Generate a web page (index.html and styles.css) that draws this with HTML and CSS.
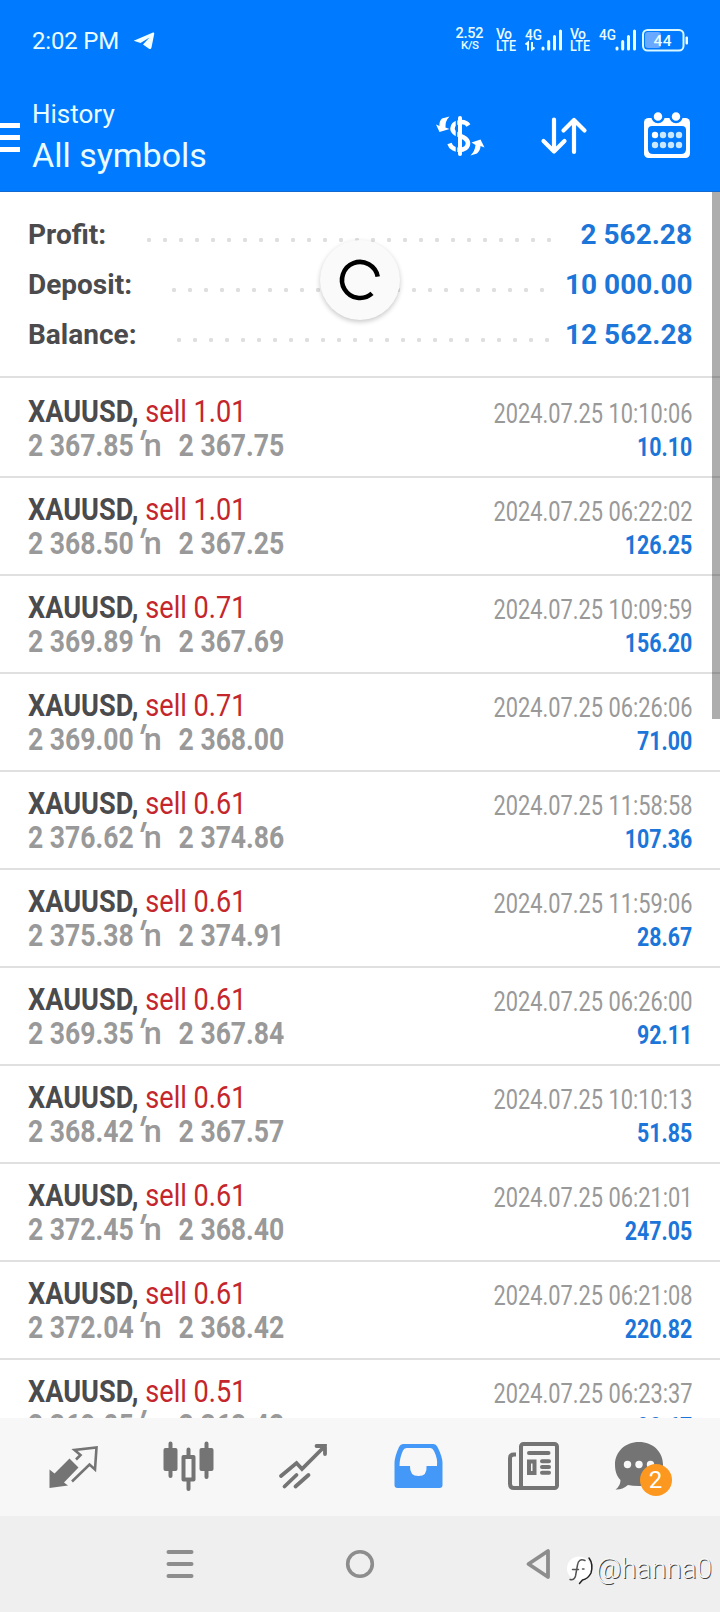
FILE: index.html
```html
<!DOCTYPE html>
<html lang="en">
<head>
<meta charset="utf-8">
<title>History</title>
<link rel="stylesheet" href="styles.css">
</head>
<body>
<div class="phone">
  <header class="header">
    <div class="status">
      <span class="clock">2:02 PM</span>
      <svg class="plane" viewBox="133 31 22 20"><path d="M133.700 40.700 153 32.600Q154.600 32 154.200 34L151.500 47.500Q151 49.800 149 48.700L143 44.500 149.500 37.500 140.500 43Z"/></svg>
      <svg class="indicators" viewBox="450 20 250 40">
        <g class="ind-text">
          <text x="455.500" y="38" font-size="14.500" textLength="28">2.52</text>
          <text x="461" y="49" font-size="11.500" textLength="18">K/S</text>
          <text x="496" y="38.500" font-size="14" textLength="16">Vo</text>
          <text x="496" y="51" font-size="14" textLength="20" lengthAdjust="spacingAndGlyphs">LTE</text>
          <text x="525" y="40" font-size="14.500" textLength="17" lengthAdjust="spacingAndGlyphs">4G</text>
          <text x="570" y="38.500" font-size="14" textLength="16">Vo</text>
          <text x="570" y="51" font-size="14" textLength="20" lengthAdjust="spacingAndGlyphs">LTE</text>
          <text x="599" y="40" font-size="14.500" textLength="17" lengthAdjust="spacingAndGlyphs">4G</text>
        </g>
        <g fill="none" stroke="#eaffff" stroke-width="2"><path d="M525.500 44.500 528 42.500V50.500M532 42V49.500L534.500 47.500"/></g>
        <g fill="none" stroke="#eaffff" stroke-width="3" stroke-linecap="round">
          <path d="M543 48v1M548.700 41.500V49M554.500 36.500V49M560.500 31V49M617 48v1M622.700 41.500V49M628.500 36.500V49M634.500 31V49"/>
        </g>
        <rect x="645" y="32" width="16" height="16" rx="3" fill="#69a9ff"/>
        <rect x="643" y="30" width="40.500" height="20.500" rx="4.500" fill="none" stroke="#d9f7ff" stroke-width="2"/>
        <rect x="685.500" y="36.500" width="2.500" height="8" rx="1" fill="#eaffff"/>
        <text class="level" x="653.500" y="45.500" font-size="15.500" textLength="18">44</text>
      </svg>
    </div>
    <div class="toolbar">
      <span class="menu"><i></i><i></i><i></i></span>
      <div class="titles">
        <div class="subtitle">History</div>
        <div class="title">All symbols</div>
      </div>
      <svg class="actions" viewBox="420 100 300 70">
        <g fill="none" stroke="#fff" stroke-width="4.500">
          <path d="M468.500 125.500C465 120 453 121 452.500 128.500 452 136 468 135 468 143.500 467.500 152 452 152 449.500 143.500"/>
          <path d="M460 118V154" stroke-linecap="round" stroke-width="4"/>
        </g>
        <path d="M456.500 120V154" stroke="#007aff" stroke-width="1.600"/>
        <g fill="#fff">
          <path d="M449.500 116.500 442 118.500Q439 121 439.500 126L436 124.500 439.500 132 449.500 129 445.500 127.500Q445 121 449.500 116.500Z"/>
          <path d="M470.500 155.500 477 153.500Q480.500 150 480.500 146L484.500 147.500 480.500 139.500 471.500 142.500 475.500 145Q475 151 470.500 155.500Z"/>
        </g>
        <g fill="none" stroke="#fff" stroke-width="4.200" stroke-linecap="round" stroke-linejoin="round">
          <path d="M554 119.500V151M543.500 141 554 151.500 564.500 141M574 152V120M563.500 130.500 574 120 584.500 130.500"/>
        </g>
        <rect x="644" y="118" width="46" height="40" rx="4.500" fill="#fff"/>
        <path d="M652 126H682Q686 126 686 130V149Q686 154 681 154H653Q648 154 648 149V130Q648 126 652 126Z" fill="#007aff"/>
        <g fill="#fff" stroke="#007aff" stroke-width="2.500"><circle cx="658" cy="116.500" r="5.500"/><circle cx="676" cy="116.500" r="5.500"/></g>
        <g fill="#c9e7ff"><circle cx="655" cy="135" r="3.200" fill="#fff"/><circle cx="663" cy="135" r="3.200"/><circle cx="671" cy="135" r="3.200"/><circle cx="679" cy="135" r="3.200"/><circle cx="655" cy="145" r="3.200"/><circle cx="663" cy="145" r="3.200"/><circle cx="671" cy="145" r="3.200"/><circle cx="679" cy="145" r="3.200"/></g>
      </svg>
    </div>
  </header>

  <main class="content">
    <section class="summary">
      <div class="sum-row"><b>Profit:</b><i class="dots dots-profit"></i><strong>2 562.28</strong></div>
      <div class="sum-row"><b>Deposit:</b><i class="dots dots-deposit"></i><strong>10 000.00</strong></div>
      <div class="sum-row"><b>Balance:</b><i class="dots dots-balance"></i><strong>12 562.28</strong></div>
    </section>
    <section class="deals">
      <div class="deal"><div class="line"><span class="sym"><b>XAUUSD,</b> sell 1.01</span><span class="date">2024.07.25 10:10:06</span></div><div class="line"><span class="price">2 367.85<i><em>′</em>n</i>2 367.75</span><span class="value">10.10</span></div></div>
      <div class="deal"><div class="line"><span class="sym"><b>XAUUSD,</b> sell 1.01</span><span class="date">2024.07.25 06:22:02</span></div><div class="line"><span class="price">2 368.50<i><em>′</em>n</i>2 367.25</span><span class="value">126.25</span></div></div>
      <div class="deal"><div class="line"><span class="sym"><b>XAUUSD,</b> sell 0.71</span><span class="date">2024.07.25 10:09:59</span></div><div class="line"><span class="price">2 369.89<i><em>′</em>n</i>2 367.69</span><span class="value">156.20</span></div></div>
      <div class="deal"><div class="line"><span class="sym"><b>XAUUSD,</b> sell 0.71</span><span class="date">2024.07.25 06:26:06</span></div><div class="line"><span class="price">2 369.00<i><em>′</em>n</i>2 368.00</span><span class="value">71.00</span></div></div>
      <div class="deal"><div class="line"><span class="sym"><b>XAUUSD,</b> sell 0.61</span><span class="date">2024.07.25 11:58:58</span></div><div class="line"><span class="price">2 376.62<i><em>′</em>n</i>2 374.86</span><span class="value">107.36</span></div></div>
      <div class="deal"><div class="line"><span class="sym"><b>XAUUSD,</b> sell 0.61</span><span class="date">2024.07.25 11:59:06</span></div><div class="line"><span class="price">2 375.38<i><em>′</em>n</i>2 374.91</span><span class="value">28.67</span></div></div>
      <div class="deal"><div class="line"><span class="sym"><b>XAUUSD,</b> sell 0.61</span><span class="date">2024.07.25 06:26:00</span></div><div class="line"><span class="price">2 369.35<i><em>′</em>n</i>2 367.84</span><span class="value">92.11</span></div></div>
      <div class="deal"><div class="line"><span class="sym"><b>XAUUSD,</b> sell 0.61</span><span class="date">2024.07.25 10:10:13</span></div><div class="line"><span class="price">2 368.42<i><em>′</em>n</i>2 367.57</span><span class="value">51.85</span></div></div>
      <div class="deal"><div class="line"><span class="sym"><b>XAUUSD,</b> sell 0.61</span><span class="date">2024.07.25 06:21:01</span></div><div class="line"><span class="price">2 372.45<i><em>′</em>n</i>2 368.40</span><span class="value">247.05</span></div></div>
      <div class="deal"><div class="line"><span class="sym"><b>XAUUSD,</b> sell 0.61</span><span class="date">2024.07.25 06:21:08</span></div><div class="line"><span class="price">2 372.04<i><em>′</em>n</i>2 368.42</span><span class="value">220.82</span></div></div>
      <div class="deal"><div class="line"><span class="sym"><b>XAUUSD,</b> sell 0.51</span><span class="date">2024.07.25 06:23:37</span></div><div class="line"><span class="price">2 369.05<i><em>′</em>n</i>2 368.42</span><span class="value">30.67</span></div></div>
    </section>
    <div class="scrollbar"></div>
    <div class="spinner"><svg viewBox="-40 -40 80 80"><path d="M17.700 -3.300A18 18 0 1 0 12 13.400" fill="none" stroke="#000" stroke-width="4.600"/></svg></div>
  </main>

  <nav class="tabs">
    <svg viewBox="15 1418 115 98"><path d="M49.500 1469.500 54.500 1473.500 69.500 1458.500 78.500 1467.500 64 1482.500 68 1485.500 49.500 1488Z" fill="#747474"/><path d="M76 1459.500 80.500 1455 74.500 1450 96.500 1447.500 95 1469.500 89.500 1464.500 72 1481.500" fill="none" stroke="#747474" stroke-width="2.600"/></svg>
    <svg viewBox="130 1418 115 98"><g fill="#747474"><rect x="163.500" y="1448" width="14" height="23" rx="2"/><rect x="199.500" y="1448" width="14" height="23" rx="2"/></g><path d="M170.500 1443.500V1476M206.500 1443.500V1477M188.500 1449.500V1456M188.500 1481V1489" stroke="#747474" stroke-width="4" stroke-linecap="round"/><rect x="183.500" y="1457" width="10" height="22.500" fill="#f7f7f7" stroke="#747474" stroke-width="4" stroke-linejoin="round"/></svg>
    <svg viewBox="245 1418 115 98"><path d="M281 1476 296.500 1463 302 1469 325 1446M316.500 1446H325V1454M284.500 1486.500 296.500 1475M295.500 1486.500 308.500 1475" fill="none" stroke="#747474" stroke-width="3.800" stroke-linecap="round"/></svg>
    <svg viewBox="360 1418 115 98"><path d="M403 1444H433.500Q436 1444 437.500 1447Q442.500 1457 442.500 1463V1485Q442.500 1488 439.500 1488H397.500Q394.500 1488 394.500 1485V1463Q394.500 1457 399 1447Q400.500 1444 403 1444Z" fill="#4499f8"/><path d="M406.500 1448H430.500Q432.500 1448 434 1451Q438 1459 437 1466H426.500Q427.500 1476 418.500 1476T410 1466H399.500Q399.500 1458 403 1450.500Q404 1448 406.500 1448Z" fill="#f7f7f7"/></svg>
    <svg viewBox="475 1418 115 98"><g fill="none" stroke="#747474" stroke-width="4"><rect x="521" y="1444" width="36" height="44" rx="2.500"/><path d="M516 1454.500H514Q510 1454.500 510 1458V1484Q510 1488 514 1488H523"/><path d="M529 1453H548.500M542 1461.300H549M542 1467H549M542 1472.800H549" stroke-linecap="round"/><rect x="529" y="1461.500" width="5.500" height="11.500"/></g></svg>
    <svg viewBox="590 1418 115 98"><path d="M639 1442C653 1442 663 1452 663 1464.500S653 1486 639 1486Q632 1486 628 1485 622 1490 615.500 1489.500 620.500 1486 620.500 1480C616.500 1476 615 1470.500 615 1464.500 615 1452 625 1442 639 1442Z" fill="#747474"/><g fill="#f8f8f8"><circle cx="627.500" cy="1464.500" r="3.700"/><circle cx="639" cy="1464.500" r="3.700"/><circle cx="650.500" cy="1464.500" r="3.700"/></g><circle cx="656" cy="1480" r="16" fill="#fc9820"/><text class="badge" x="655.500" y="1488" text-anchor="middle">2</text></svg>
  </nav>

  <footer class="sysnav">
    <svg viewBox="90 1516 180 96"><path d="M168.500 1552H191.500M168.500 1564H191.500M168.500 1576H191.500" stroke="#8d8d8d" stroke-width="4" stroke-linecap="round"/></svg>
    <svg viewBox="270 1516 180 96"><circle cx="360" cy="1564" r="12.300" fill="none" stroke="#8d8d8d" stroke-width="3.600"/></svg>
    <svg viewBox="450 1516 180 96"><path d="M528.500 1564 548 1551V1577Z" fill="none" stroke="#8d8d8d" stroke-width="3.800" stroke-linejoin="round"/></svg>
    <svg class="mark" viewBox="560 1546 160 50">
      <circle cx="579" cy="1568.500" r="12" fill="#fff"/>
      <g fill="none" stroke-width="1.500" stroke-linecap="round" stroke-linejoin="round">
        <path d="M585 1560.500Q578.500 1558 577.500 1565L575.500 1576Q574.500 1580.500 570 1579.500M572.500 1569.500H578.500M582.500 1569H584" stroke="#555"/>
        <path d="M589 1558Q593.500 1564 591 1573 588 1579 582.500 1580L579.500 1583.500" stroke="#222"/>
      </g>
      <text class="handle" x="596" y="1578" textLength="116" lengthAdjust="spacingAndGlyphs">@hanna0</text>
    </svg>
  </footer>
</div>
</body>
</html>
```
FILE: styles.css
```css
* { box-sizing: border-box; }
body { margin: 0; background: #fff; font-family: Roboto, "Liberation Sans", sans-serif; }
i { font-style: normal; }
svg { display: block; }
.phone { width: 720px; height: 1612px; display: flex; flex-direction: column; overflow: hidden; }

.header { height: 192px; flex: none; background: #007aff; border-bottom: 1px solid #1269cf; color: #e9fdff; }
.status { height: 80px; display: flex; align-items: center; padding-left: 32px; }
.clock { width: 101px; font-size: 24px; line-height: 80px; letter-spacing: -.2px; padding-top: 1px; }
.plane { width: 22px; height: 20px; margin-top: 2px; fill: #f2ffff; }
.indicators { width: 250px; height: 40px; margin: 0 20px 0 auto; }
.ind-text { fill: #e9fdff; font-weight: 500; }
.level { fill: #e9fdff; font-weight: 500; }
.toolbar { display: flex; align-items: flex-start; height: 111px; }
.menu { display: flex; flex-direction: column; gap: 7px; width: 20px; margin-top: 43px; }
.menu i { height: 5px; background: #fff; }
.titles { margin: 19px 0 0 12px; white-space: nowrap; }
.subtitle { font-size: 26px; line-height: 30px; height: 36px; }
.title { font-size: 34px; line-height: 40px; }
.actions { width: 300px; height: 70px; margin: 20px 0 0 auto; }

.content { position: relative; height: 1226px; flex: none; overflow: hidden; background: #fff; }
.summary { height: 186px; padding: 18px 28px 0; }
.sum-row { height: 50px; line-height: 50px; display: flex; align-items: center; justify-content: space-between; font-size: 28px; }
.sum-row b { color: #4b4b4d; }
.sum-row strong { color: #1c75d8; width: 127px; text-align: right; white-space: nowrap; }
.dots { height: 4px; margin: 9px 16px 0 auto; background: radial-gradient(circle at 2px 2px, #dfdfdf 1.900px, transparent 2.500px) 0 0 / 16px 4px repeat-x; }
.dots-profit { width: 404px; margin-right: 14px; }
.dots-deposit { width: 372px; margin-right: 21px; }
.dots-balance { width: 372px; margin-right: 16px; }

.deal { height: 98px; padding: 14px 28px 0; border-top: 2px solid #e0e0e0; }
.deal:first-child { height: 100px; padding-top: 16px; margin-top: -2px; }
.line { height: 34px; line-height: 34px; display: flex; align-items: baseline; justify-content: space-between; white-space: nowrap; }
.sym { font-size: 32px; color: #c4262b; transform: scaleX(.848); transform-origin: left; }
.sym b { color: #4b4b4d; }
.date { font-size: 27px; color: #999; transform: translateY(1px) scaleX(.807); transform-origin: right; }
.price { font-size: 32px; font-weight: 700; color: #999; transform: scaleX(.83); transform-origin: left; }
.price i { display: inline-block; width: 54px; padding-left: 6px; font-weight: 500; transform: scaleX(1.22); transform-origin: 6px 50%; }
.price em { display: inline-block; transform: skewX(-8deg) scale(1.25); transform-origin: 50% 30%; }
.value { font-size: 26px; font-weight: 700; color: #1c75d8; transform: scaleX(.82); transform-origin: right; }

.scrollbar { position: absolute; right: 0; top: 0; width: 8px; height: 527px; background: rgba(0, 0, 0, .32); }
.spinner { position: absolute; left: 320px; top: 48px; width: 80px; height: 80px; border-radius: 50%; background: #fafafa; box-shadow: 0 2px 5px rgba(0, 0, 0, .22); }

.tabs { display: flex; height: 98px; flex: none; padding-left: 15px; background: #f7f7f7; }
.tabs svg { width: 115px; height: 98px; }
.badge { fill: #fff; font-size: 24px; }
.sysnav { position: relative; display: flex; height: 96px; flex: none; padding-left: 90px; background: #efefef; }
.sysnav svg { width: 180px; height: 96px; flex: none; }
.sysnav .mark { position: absolute; left: 560px; top: 30px; width: 160px; height: 50px; }
.handle { font-size: 28px; font-weight: 300; fill: #f6f6f6; text-shadow: 1px 1px .5px #444; }
```
